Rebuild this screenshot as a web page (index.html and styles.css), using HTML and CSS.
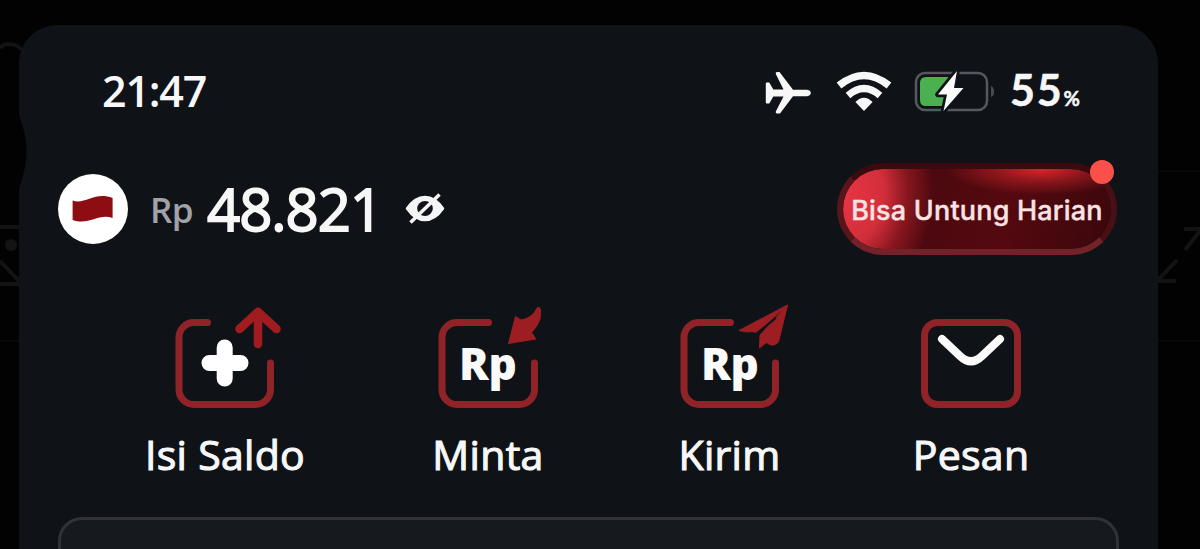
FILE: index.html
```html
<!DOCTYPE html>
<html lang="id">
<head>
<meta charset="utf-8">
<title>Dompet</title>
<link rel="stylesheet" href="styles.css">
</head>
<body>
<svg class="backdrop" viewBox="0 0 1200 549" fill="none" stroke="#131313" stroke-width="4">
  <path d="M0 48c5-6 16-5 22 2M0 227h20M0 284h20M0 261l20 21"/>
  <circle cx="11" cy="245" r="6" fill="#131313" stroke="none"/>
  <path d="M1184 229h18M1200 231l-15 19M1177 260l-19 20M1158 281h18"/>
  <path d="M0 341h20M1158 341h42M1158 171h42" stroke="#080808" stroke-width="2"/>
</svg>
<main class="screen">
  <svg class="notch" viewBox="0 0 8 76"><path d="M0 0C2 10 7.500 18 7.500 37S2 66 0 76z" fill="#020202"/></svg>
  <header class="status">
    <span class="clock">21:47</span>
    <div class="indicators">
      <svg class="plane" width="46" height="46" viewBox="0 0 46 46" fill="#f7f7f8"><path d="M.8 12.500q0-1 1-1h2.500l4 7H18.500L10.800 3Q10.200 1 12 1h2.500L28 18.800h14q3.800.6 3.800 3.200T42 25.200H28L15 42.500H12q-1.700-.2-1.200-2L18.500 25.500H8.300l-4 7H1.800q-1 0-1-1z"/></svg>
      <svg class="wifi" width="56" height="44" viewBox="0 0 56 44" fill="none" stroke="#f7f7f8"><path d="M3 14.500Q28-5.500 53 14.500" stroke-width="7.500"/><path d="M12 24.500Q28 10.500 44 24.500" stroke-width="7"/><path d="M28 40l-8.600-9Q28 22.500 36.600 31z" fill="#f7f7f8" stroke="none"/></svg>
      <svg class="battery" width="82" height="46" viewBox="0 0 82 46"><rect x="2" y="3" width="71" height="37" rx="9" fill="none" stroke="#55585c" stroke-width="2.500"/><path d="M77 16q3 1 3 5.500T77 27z" fill="#484b4f"/><path d="M12 7h28L31 34v2H12q-6 0-6-6V13q0-6 6-6z" fill="#4bb050"/><path d="M43 1L24 24.500h9L29.500 41 49.500 18H40z" fill="#fafafa" stroke="#0f1319" stroke-width="5.500" stroke-linejoin="round" paint-order="stroke"/></svg>
      <span class="level">55<small>%</small></span>
    </div>
  </header>
  <section class="account">
    <div class="balance">
      <span class="flag"><svg width="42" height="28" viewBox="0 0 42 28"><path d="M.6 5.500C13 10 23-4 40.600 3V23C26 18 17 31 .6 25z" fill="#8e0d13"/></svg></span>
      <span class="currency">Rp</span>
      <span class="amount">48.821</span>
      <svg class="eye" width="40" height="34" viewBox="0 0 40 34"><path d="M2 16.500Q10 5 20 5T38 16.500Q30 28 20 28T2 16.500z" fill="#f5f5f6" stroke="#f5f5f6" stroke-width="2.500" stroke-linejoin="round"/><ellipse cx="20" cy="16.500" rx="7.800" ry="7.400" fill="#10141a"/><path d="M5.500 30.500L34.500 2.500" stroke="#f5f5f6" stroke-width="3.500"/></svg>
    </div>
    <div class="promo"><span class="promo-label">Bisa Untung Harian</span><i class="promo-dot"></i></div>
  </section>
  <nav class="actions">
    <div class="action">
      <svg class="icon" viewBox="0 0 124 112"><path class="frame" d="M44.500 22.500H31A15 15 0 0 0 16 37.500V89.500A15 15 0 0 0 31 104.500H92.500A15 15 0 0 0 107.500 89.500V63"/><path d="M61.700 47.500v31M46.500 63h31" fill="none" stroke="#fff" stroke-width="16" stroke-linecap="round"/><path class="arrow" d="M95 44V13M76.500 29L95 12 113.500 29"/></svg>
      <span class="label">Isi Saldo</span>
    </div>
    <div class="action">
      <svg class="icon" viewBox="0 0 124 112"><path class="frame" d="M62.500 22.500H31A15 15 0 0 0 16 37.500V89.500A15 15 0 0 0 31 104.500H93.500A15 15 0 0 0 108.500 89.500V63"/><text class="rp" x="33" y="79.500">Rp</text><path class="solid" d="M82.500 43.500L89.500 16.500 95 20Q106 18.500 111.500 7.500L114 8Q117.500 20 105.500 32.500L110 39z"/></svg>
      <span class="label">Minta</span>
    </div>
    <div class="action">
      <svg class="icon" viewBox="0 0 124 112"><path class="frame" d="M62.500 22.500H31A15 15 0 0 0 16 37.500V89.500A15 15 0 0 0 31 104.500H92.500A15 15 0 0 0 107.500 89.500V63"/><text class="rp" x="33" y="79.500">Rp</text><path class="solid" d="M71 30.500L119.500 5 89 32.500Q83 31 79 32z"/><path class="solid" d="M119.500 5L110.500 42Q105 48 98.500 42.500L91.500 48 92 35z"/><path d="M88 34L108 18" stroke="#10141a" stroke-width="2"/></svg>
      <span class="label">Kirim</span>
    </div>
    <div class="action">
      <svg class="icon" viewBox="0 0 124 112"><rect class="frame" x="15.500" y="22.500" width="93" height="82" rx="13"/><path d="M33 39L51 56Q62 66.500 73 56L91 39" fill="none" stroke="#fafafa" stroke-width="8" stroke-linecap="round"/></svg>
      <span class="label">Pesan</span>
    </div>
  </nav>
  <section class="panel"></section>
</main>
</body>
</html>
```
FILE: styles.css
```css
* { box-sizing: border-box; }
body {
  margin: 0;
  height: 549px;
  overflow: hidden;
  padding: 25px 42px 0 19px;
  background: #020202;
  color: #f7f7f8;
  font-family: "Open Sans", "Noto Sans", sans-serif;
  white-space: nowrap;
}
.backdrop { position: absolute; left: 0; top: 0; width: 1200px; height: 549px; }
.screen {
  position: relative;
  height: 524px;
  overflow: hidden;
  border-radius: 38px 38px 0 0;
  background: #0f1318;
}
.notch { position: absolute; left: 0; top: 89px; width: 8px; height: 76px; }
.status {
  display: flex;
  justify-content: space-between;
  align-items: center;
  height: 132px;
  padding: 0 74px 0 83px;
}
.clock { font-size: 43px; line-height: 50px; font-weight: 600; letter-spacing: -1.2px; }
.indicators { display: flex; align-items: center; width: 319px; padding-top: 3px; }
.plane { margin-right: 25px; margin-top: 2px; }
.wifi { margin-right: 22px; }
.battery { margin-right: 14px; }
.level { padding-top: 3px; font-family: Lato, sans-serif; font-size: 43px; line-height: 50px; font-weight: 700; letter-spacing: 1.8px; -webkit-text-stroke: 0.5px #f7f7f8; }
.level small { font-size: 20px; letter-spacing: 0; }
.account {
  display: flex;
  justify-content: space-between;
  height: 118px;
  padding: 5px 41px 0 39px;
}
.balance { display: flex; align-items: center; height: 94px; }
.flag {
  display: grid;
  place-items: center;
  width: 70px;
  height: 70px;
  border-radius: 50%;
  background: #fff;
}
.currency { width: 56px; margin-left: 22px; padding-top: 2px; font-size: 35px; line-height: 50px; font-weight: 600; color: #a1a3a8; letter-spacing: -0.5px; }
.amount { width: 199px; padding-left: 1px; font-size: 58px; line-height: 70px; font-weight: 400; letter-spacing: -1px; -webkit-text-stroke: 1.8px #f7f7f8; }
.promo {
  position: relative;
  display: grid;
  place-items: center;
  width: 280px;
  height: 92px;
  margin-top: 1px;
  border-radius: 46px;
  border: 6px solid #681a20;
  border-color: #3a0a0e #4a0f14 #73222a #5a151b;
  background:
    radial-gradient(ellipse 95px 26px at 74% 0, #d8262b 0, #c4232880 50%, transparent 100%) padding-box,
    radial-gradient(ellipse 90px 115px at 0 30%, #e83543 0, #d22f3b 45%, #a01c25a0 72%, transparent 100%) padding-box,
    linear-gradient(100deg, #7a1219 0, #4c090f 33%, #54090f 60%, #3b070c 100%) padding-box;
}
.promo-label { padding-top: 4px; font-family: Inter, sans-serif; font-size: 27px; line-height: 40px; font-weight: 500; color: #fbe3e4; letter-spacing: 0.2px; -webkit-text-stroke: 0.4px #fbe3e4; }
.promo-dot {
  position: absolute;
  right: -3px;
  top: -9px;
  width: 24px;
  height: 24px;
  border-radius: 50%;
  background: #fb5049;
}
.actions {
  display: grid;
  grid-template-columns: 284px 242px 241px 242px;
  height: 242px;
  padding-left: 64px;
}
.action { display: flex; flex-direction: column; align-items: center; }
.icon { width: 124px; height: 112px; margin-top: 25px; overflow: visible; }
.frame { fill: none; stroke: #8f2328; stroke-width: 7; stroke-linecap: round; }
.arrow { fill: none; stroke: #a11c20; stroke-width: 8.5; stroke-linecap: round; stroke-linejoin: round; }
.solid { fill: #9c1e22; stroke: #9c1e22; stroke-width: 1; stroke-linejoin: round; }
.rp { font-size: 44px; font-weight: 800; letter-spacing: -0.3px; fill: #fafafa; }
.label { margin-top: 13px; font-size: 41px; line-height: 58px; font-weight: 400; letter-spacing: 0.3px; -webkit-text-stroke: 1.1px #f7f7f8; }
.panel {
  height: 100px;
  margin: 0 39px;
  border: 3px solid #303237;
  border-radius: 24px;
  background: #16191e;
}
```
